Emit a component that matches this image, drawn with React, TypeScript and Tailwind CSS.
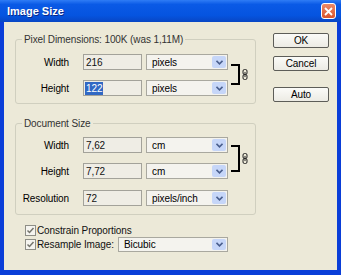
import React from "react"

function Chevron() {
  return (
    <svg width="7" height="5" viewBox="0 0 7 5">
      <path d="M0.5 0.8 L3.5 3.8 L6.5 0.8" fill="none" stroke="#4a5f8e" strokeWidth="1.6" />
    </svg>
  )
}

function Select({ value, className }: { value: string; className: string }) {
  return (
    <div className={`flex items-center border border-[#a9a89f] bg-[#f4f3ee] ${className}`}>
      <span className="flex-1 whitespace-nowrap pl-[5px] text-black">{value}</span>
      <span className="mr-px flex h-[calc(100%-2px)] w-[14px] items-center justify-center rounded-[2px] bg-[#c6d6f8]">
        <Chevron />
      </span>
    </div>
  )
}

function Row({ label, value, unit, selected, className = "" }: { label: string; value: string; unit: string; selected?: boolean; className?: string }) {
  return (
    <div className={`flex h-[16px] items-center ${className}`}>
      <span className="w-[53px] text-right text-black">{label}</span>
      <div className="ml-[14px] flex h-full w-[59px] items-center border border-[#a3a29a] bg-[#efede5] pl-px">
        {selected ? <span className="bg-[#3168c4] px-px text-white">{value}</span> : <span className="px-px">{value}</span>}
      </div>
      <Select value={unit} className="ml-[4px] h-full w-[82px]" />
    </div>
  )
}

function Chain() {
  return (
    <svg width="6" height="11" viewBox="0 0 6 11" className="ml-[2px]">
      <rect x="1" y="0.5" width="4" height="5" rx="1.5" fill="none" stroke="#222" strokeWidth="1" />
      <rect x="1" y="5.5" width="4" height="5" rx="1.5" fill="none" stroke="#222" strokeWidth="1" />
      <line x1="3" y1="3" x2="3" y2="8" stroke="#222" strokeWidth="1" />
    </svg>
  )
}

function Check({ checked }: { checked: boolean }) {
  return (
    <span className="flex h-[11px] w-[11px] shrink-0 items-center justify-center border border-[#8e8e86] bg-[#f5f4ef]">
      {checked && (
        <svg width="9" height="9" viewBox="0 0 9 9">
          <path d="M1.5 4.5 L3.5 6.5 L7.5 2" fill="none" stroke="#74746c" strokeWidth="1.5" />
        </svg>
      )}
    </span>
  )
}

function Button({ children, className = "" }: { children: React.ReactNode; className?: string }) {
  return (
    <div className={`flex h-[15px] w-[56px] items-center justify-center rounded-[2px] border border-[#5d5d58] bg-[linear-gradient(#fbfbf8,#ecebe4)] text-black ${className}`}>
      {children}
    </div>
  )
}

export default function App() {
  return (
    <div className="flex h-[275px] w-[341px] flex-col bg-[#0a3ed8] font-['Liberation_Sans',Arial,sans-serif] text-[10px] leading-[13px] tracking-[-0.1px] text-[#111]">
      {/* Title bar */}
      <div className="flex h-[22px] items-center justify-between bg-[linear-gradient(#2f7cf5_0%,#0a5ae6_20%,#0554e0_70%,#0846c4_100%)] pl-[7px] pr-[5px]">
        <span className="text-[11px] font-bold tracking-normal text-white [text-shadow:1px_1px_0_#0a2a8a]">Image Size</span>
        <div className="flex h-[16px] w-[15px] items-center justify-center rounded-[3px] border border-white bg-[linear-gradient(#ec8a68,#d9542d)]">
          <svg width="9" height="9" viewBox="0 0 9 9">
            <path d="M1 1 L8 8 M8 1 L1 8" stroke="white" strokeWidth="1.8" />
          </svg>
        </div>
      </div>

      {/* Body */}
      <div className="mx-[4px] mb-[5px] flex flex-1 bg-[#ece9d8] pl-[11px] pt-[11px]">
        <div className="flex w-[241px] flex-col">
          <fieldset className="rounded-[3px] border border-[#d0cfbf] pb-[7px] pr-[7px]">
            <legend className="ml-[6px] px-[2px] text-[#333]">Pixel Dimensions: 100K (was 1,11M)</legend>
            <div className="flex items-start pt-[8px]">
              <div className="flex flex-col gap-[10px]">
                <Row label="Width" value="216" unit="pixels" />
                <Row label="Height" value="122" unit="pixels" selected />
              </div>
              <div className="mt-[10px] flex items-center">
                <div className="ml-[3px] h-[21px] w-[9px] border-y-2 border-r-2 border-black" />
                <Chain />
              </div>
            </div>
          </fieldset>

          <fieldset className="mt-[13px] rounded-[3px] border border-[#d0cfbf] pb-[8px] pr-[7px]">
            <legend className="ml-[6px] px-[2px] text-[#333]">Document Size</legend>
            <div className="flex items-start pt-[7px]">
              <div className="flex flex-col gap-[10px]">
                <Row label="Width" value="7,62" unit="cm" />
                <Row label="Height" value="7,72" unit="cm" />
                <Row label="Resolution" value="72" unit="pixels/inch" className="mt-px" />
              </div>
              <div className="mt-[8px] flex items-center">
                <div className="ml-[3px] h-[27px] w-[9px] border-y-2 border-r-2 border-black" />
                <Chain />
              </div>
            </div>
          </fieldset>

          <div className="ml-[10px] mt-[9px] flex h-[13px] items-center">
            <Check checked />
            <span className="ml-px whitespace-nowrap">Constrain Proportions</span>
          </div>
          <div className="ml-[10px] flex h-[15px] items-center">
            <Check checked />
            <span className="ml-px w-[81px] whitespace-nowrap">Resample Image:</span>
            <Select value="Bicubic" className="h-[15px] w-[110px]" />
          </div>
        </div>

        <div className="ml-[17px] flex flex-col">
          <Button>OK</Button>
          <Button className="mt-[8px]">Cancel</Button>
          <Button className="mt-[16px]">Auto</Button>
        </div>
      </div>
    </div>
  )
}
